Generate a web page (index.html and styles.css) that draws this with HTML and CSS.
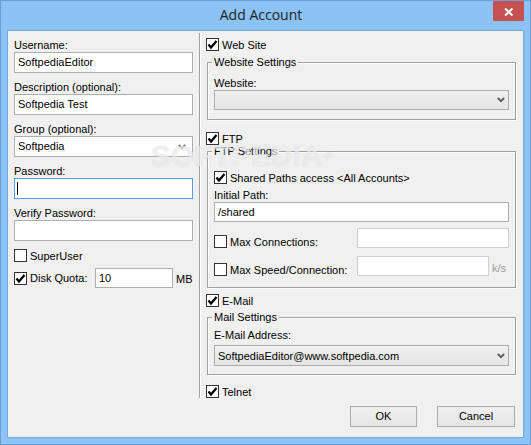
FILE: index.html
```html
<!DOCTYPE html>
<html>
<head>
<meta charset="utf-8">
<title>Add Account</title>
<link rel="stylesheet" href="styles.css">
</head>
<body>
<div class="window">
  <div class="titlebar">
    <div></div>
    <div class="title">Add Account</div>
    <div class="tb-right">
      <div class="close"><svg width="31" height="20" viewBox="0 0 31 20"><path d="M12 7.5 L19.5 14.5 M19.5 7.5 L12 14.5" stroke="#fff" stroke-width="2" fill="none"/></svg></div>
    </div>
  </div>
  <div class="client">
    <div class="main">
      <div class="left">
        <div class="lbl">Username:</div>
        <div class="edit">SoftpediaEditor</div>
        <div class="lbl">Description (optional):</div>
        <div class="edit">Softpedia Test</div>
        <div class="lbl">Group (optional):</div>
        <div class="edit combo-edit"><span class="ctext">Softpedia</span><svg class="chev" width="8" height="6" viewBox="0 0 8 6"><path d="M0.8 1 L4 4.2 L7.2 1" stroke="#777" stroke-width="2" fill="none"/></svg></div>
        <div class="lbl">Password:</div>
        <div class="edit focus"><span class="caret"></span></div>
        <div class="lbl">Verify Password:</div>
        <div class="edit"></div>
        <div class="cb su"><span class="box"></span><span class="cbl">SuperUser</span></div>
        <div class="diskrow">
          <span class="box"><svg width="11" height="11" viewBox="0 0 11 11"><path d="M1.5 5.5 L4 8.5 L9.5 2" stroke="#000" stroke-width="2.3" fill="none"/></svg></span>
          <span class="cbl disklbl">Disk Quota:</span>
          <div class="edit quota">10</div>
          <span class="unit">MB</span>
        </div>
      </div>
      <div class="sep"></div>
      <div class="right">
        <div class="cb"><span class="box"><svg width="11" height="11" viewBox="0 0 11 11"><path d="M1.5 5.5 L4 8.5 L9.5 2" stroke="#000" stroke-width="2.3" fill="none"/></svg></span><span class="cbl">Web Site</span></div>
        <div class="group g-web">
          <div class="legend">Website Settings</div>
          <div class="lbl glbl">Website:</div>
          <div class="combo"><span class="ctext"></span><svg class="chev" width="8" height="6" viewBox="0 0 8 6"><path d="M0.8 1 L4 4.2 L7.2 1" stroke="#5f5f5f" stroke-width="2" fill="none"/></svg></div>
        </div>
        <div class="cb ftp"><span class="box"><svg width="11" height="11" viewBox="0 0 11 11"><path d="M1.5 5.5 L4 8.5 L9.5 2" stroke="#000" stroke-width="2.3" fill="none"/></svg></span><span class="cbl">FTP</span></div>
        <div class="group g-ftp">
          <div class="legend">FTP Settings</div>
          <div class="cb shared"><span class="box"><svg width="11" height="11" viewBox="0 0 11 11"><path d="M1.5 5.5 L4 8.5 L9.5 2" stroke="#000" stroke-width="2.3" fill="none"/></svg></span><span class="cbl">Shared Paths access &lt;All Accounts&gt;</span></div>
          <div class="lbl glbl">Initial Path:</div>
          <div class="edit path">/shared</div>
          <div class="frow conn">
            <span class="box"></span><span class="cbl flbl">Max Connections:</span>
            <div class="edit dis wconn"></div>
          </div>
          <div class="frow speed">
            <span class="box"></span><span class="cbl flbl">Max Speed/Connection:</span>
            <div class="edit dis wspeed"></div>
            <span class="ks">k/s</span>
          </div>
        </div>
        <div class="cb email"><span class="box"><svg width="11" height="11" viewBox="0 0 11 11"><path d="M1.5 5.5 L4 8.5 L9.5 2" stroke="#000" stroke-width="2.3" fill="none"/></svg></span><span class="cbl">E-Mail</span></div>
        <div class="group g-mail">
          <div class="legend">Mail Settings</div>
          <div class="lbl glbl">E-Mail Address:</div>
          <div class="combo mailcombo"><span class="ctext">SoftpediaEditor@www.softpedia.com</span><svg class="chev" width="8" height="6" viewBox="0 0 8 6"><path d="M0.8 1 L4 4.2 L7.2 1" stroke="#5f5f5f" stroke-width="2" fill="none"/></svg></div>
        </div>
        <div class="cb telnet"><span class="box"><svg width="11" height="11" viewBox="0 0 11 11"><path d="M1.5 5.5 L4 8.5 L9.5 2" stroke="#000" stroke-width="2.3" fill="none"/></svg></span><span class="cbl">Telnet</span></div>
      </div>
    </div>
    <div class="buttons">
      <div class="btn ok">OK</div>
      <div class="btn cancel">Cancel</div>
    </div>
  </div>
  <div class="watermark">SOFTPEDIA<span class="reg">®</span></div>
</div>
</body>
</html>
```

FILE: styles.css
```css
* { box-sizing: border-box; }
html, body { margin: 0; padding: 0; }
body {
  width: 531px;
  height: 445px;
  overflow: hidden;
  font-family: "Liberation Sans", Arial, sans-serif;
  font-size: 11px;
  color: #000;
  background: #8bc3f7;
}
.window {
  position: relative;
  width: 531px;
  height: 445px;
  background: #8bc3f7;
  border: 1px solid #6c9fd3;
  padding: 0 6px 6px 6px;
  display: flex;
  flex-direction: column;
}
.titlebar {
  height: 29px;
  display: grid;
  grid-template-columns: 1fr auto 1fr;
}
.title {
  font-family: "Open Sans", "Noto Sans", sans-serif;
  font-size: 14px;
  line-height: 27px;
  color: #222;
  margin-right: 9px;
}
.tb-right { display: flex; justify-content: flex-end; align-items: flex-start; }
.close {
  width: 31px;
  height: 20px;
  background: #c75050;
}
.close svg { display: block; }
.client {
  flex: 1;
  background: #f0f0f0;
  border: 1px solid #78a8da;
  display: flex;
  flex-direction: column;
}
.main {
  display: flex;
  padding-left: 6px;
}
.left {
  width: 179px;
  padding-top: 7px;
  display: flex;
  flex-direction: column;
}
.lbl {
  height: 14px;
  line-height: 14px;
  white-space: nowrap;
}
.edit {
  height: 21px;
  border: 1px solid #abadb3;
  background: #fff;
  padding: 0 3px;
  line-height: 19px;
  margin-bottom: 7px;
  white-space: nowrap;
  display: flex;
  align-items: center;
}
.edit.focus { border-color: #569de5; }
.caret {
  display: inline-block;
  width: 1px;
  height: 13px;
  background: #000;
  margin-left: -1px;
}
.combo-edit .ctext, .combo .ctext { flex: 1; }
.chev { display: block; margin-right: 3px; }
.cb {
  display: flex;
  align-items: flex-start;
  height: 13px;
}
.box {
  width: 13px;
  height: 13px;
  flex: none;
  border: 1px solid #333;
  background: #fff;
  display: block;
}
.box svg { display: block; }
.cbl {
  margin-left: 3px;
  line-height: 13px;
  padding-top: 1px;
  white-space: nowrap;
}
.cb.su { margin-top: 1px; }
.diskrow {
  display: flex;
  align-items: center;
  height: 20px;
  margin-top: 6px;
}
.disklbl { width: 65px; }
.edit.quota {
  width: 78px;
  height: 20px;
  line-height: 18px;
  margin-bottom: 0;
}
.unit { margin-left: 3px; line-height: 13px; padding-top: 2px; }
.sep {
  width: 1px;
  margin: 2px 0 0 6px;
  background: #a0a0a0;
  box-shadow: 1px 0 0 #fff;
}
.right {
  width: 310px;
  margin-left: 6px;
  padding-top: 7px;
  display: flex;
  flex-direction: column;
}
.group {
  margin-left: 1px;
  width: 309px;
  border: 1px solid #a0a0a0;
  box-shadow: inset 1px 1px 0 #fff, 1px 1px 0 #fff;
  padding: 0 6px 0 6px;
  display: flex;
  flex-direction: column;
}
.legend {
  align-self: flex-start;
  margin-top: -7px;
  margin-left: -2px;
  padding: 0 2px;
  background: #f0f0f0;
  line-height: 13px;
  height: 13px;
}
.g-web { margin-top: 11px; padding-bottom: 9px; }
.g-web .glbl { margin-top: 7px; }
.combo {
  height: 20px;
  border: 1px solid #acacac;
  background: linear-gradient(#f0f0f0, #e5e5e5);
  display: flex;
  align-items: center;
  padding-left: 3px;
  white-space: nowrap;
}
.cb.ftp { margin-top: 12px; }
.g-ftp { margin-top: 6px; padding-bottom: 11px; }
.cb.shared { margin-top: 13px; }
.g-ftp .glbl { margin-top: 4px; }
.edit.path { height: 20px; line-height: 18px; margin-bottom: 0; }
.frow {
  display: flex;
  align-items: flex-start;
  height: 20px;
}
.frow .box { margin-top: 7px; }
.frow .flbl { width: 127px; margin-top: 7px; }
.frow .edit { height: 20px; margin-bottom: 0; }
.edit.dis { border-color: #cfcfcf; }
.wconn { width: 152px; }
.wspeed { width: 132px; }
.frow.conn { margin-top: 6px; }
.frow.speed { margin-top: 8px; }
.ks {
  margin-left: 3px;
  color: #9d9d9d;
  line-height: 13px;
  padding-top: 6px;
}
.cb.email { margin-top: 6px; }
.g-mail { margin-top: 10px; padding-bottom: 8px; }
.g-mail .glbl { margin-top: 4px; }
.mailcombo { margin-top: 3px; height: 21px; }
.cb.telnet { margin-top: 10px; }
.buttons {
  display: flex;
  justify-content: flex-end;
  gap: 20px;
  padding-right: 8px;
  margin-top: 8px;
}
.btn {
  height: 21px;
  border: 1px solid #acacac;
  background: linear-gradient(#f0f0f0, #e5e5e5);
  display: flex;
  align-items: center;
  justify-content: center;
  line-height: 13px;
}
.btn.ok { width: 67px; }
.btn.cancel { width: 78px; }
.watermark {
  position: absolute;
  left: 150px;
  top: 140px;
  font-family: "Liberation Sans", Arial, sans-serif;
  font-weight: bold;
  font-size: 30px;
  line-height: 30px;
  color: rgba(255, 255, 255, 0.6);
  text-shadow: 0 0 1px rgba(140, 140, 140, 0.35);
  pointer-events: none;
  white-space: nowrap;
}
.watermark .reg {
  font-size: 11px;
  vertical-align: top;
  margin-left: 2px;
}
```
